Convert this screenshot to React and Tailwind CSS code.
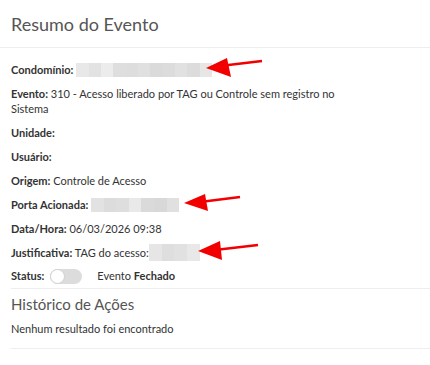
import React from "react";

function Blur({ w, h = 14, cells }) {
  return (
    <span className="inline-flex align-middle -mt-[2px]" style={{ width: w, height: h }}>
      {cells.map((c, i) => (
        <span key={i} className="h-full flex-1" style={{ background: c }} />
      ))}
    </span>
  );
}

function Row({ label, children, tall }) {
  return (
    <div className={tall ? "h-[30px] leading-[15px]" : "h-[15px] leading-[15px] whitespace-nowrap"}>
      <span className="font-bold text-[#333]">{label}</span> {children}
    </div>
  );
}

export default function App() {
  return (
    <div
      className="relative w-[430px] h-[365px] bg-white text-[11px] text-[#333]"
      style={{ fontFamily: "Lato, 'Noto Sans', sans-serif" }}
    >
      <div className="h-[48px] border-b border-[#eeeeee] px-[11px] flex items-center">
        <h1 className="text-[18px] font-normal text-[#555] leading-none">Resumo do Evento</h1>
      </div>
      <div className="pl-[11px]">
        <div className="pt-[13.5px] w-[336px] flex flex-col gap-[9px]">
          <Row label="Condomínio:">
            <Blur w={136} cells={["#e8e8e8", "#e2e2e2", "#ececec", "#dedede", "#dddddd", "#e0e0e0", "#dadada", "#dcdcdc", "#e1e1e1", "#dcdcdc", "#e6e6e6"]} />
          </Row>
          <Row tall label="Evento:">310 - Acesso liberado por TAG ou Controle sem registro no Sistema</Row>
          <Row label="Unidade:" />
          <Row label="Usuário:" />
          <Row label="Origem:">Controle de Acesso</Row>
          <Row label="Porta Acionada:">
            <Blur w={88} cells={["#e2e2e2", "#dcdcdc", "#dedede", "#e9e9e9", "#dadada", "#d8d8d8", "#e0e0e0"]} />
          </Row>
          <Row label="Data/Hora:">06/03/2026 09:38</Row>
          <Row label="Justificativa:">
            TAG do acesso:<Blur w={51} h={17} cells={["#e6e6e6", "#dedede", "#e1e1e1", "#e8e8e8"]} />
          </Row>
          <div className="flex items-center h-[15px]">
            <span className="font-bold">Status:</span>
            <span className="ml-[6px] relative inline-block w-[32px] h-[15px] rounded-full bg-[#dcdcdc]">
              <span className="absolute left-0 top-0 w-[15px] h-[15px] rounded-full bg-white border border-[#d0d0d0]" />
            </span>
            <span className="ml-[15px]">
              Evento <span className="font-bold">Fechado</span>
            </span>
          </div>
        </div>
        <div className="mt-[4px] border-t border-[#eeeeee] pt-[6px] pb-[12px]">
          <h2 className="text-[15px] font-normal text-[#555] leading-[18px]">Histórico de Ações</h2>
          <p className="mt-[8.5px] leading-[15px]">Nenhum resultado foi encontrado</p>
        </div>
        <div className="border-t border-[#eeeeee]" />
      </div>
      <svg className="absolute left-0 top-0 pointer-events-none" width="430" height="365">
        <g fill="#f20000" stroke="#f20000">
          <line x1="262" y1="61" x2="220" y2="66" strokeWidth="2.5" />
          <polygon points="206,68 227,58 231,77" strokeWidth="0" />
          <line x1="240" y1="197" x2="200" y2="202" strokeWidth="2.5" />
          <polygon points="184,203 205,194 208,211" strokeWidth="0" />
          <line x1="258" y1="245" x2="215" y2="250" strokeWidth="2.5" />
          <polygon points="198,251 220,241 222,260" strokeWidth="0" />
        </g>
      </svg>
    </div>
  );
}
